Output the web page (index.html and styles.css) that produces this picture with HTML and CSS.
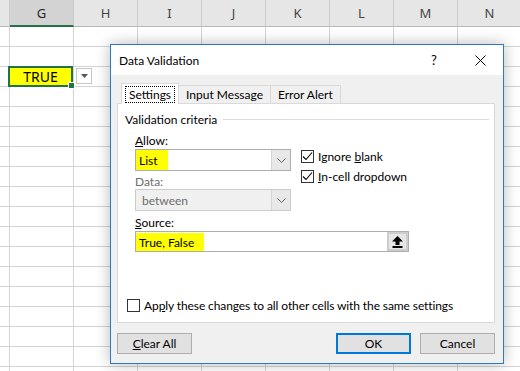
FILE: index.html
```html
<!DOCTYPE html>
<html>
<head>
	<meta charset="utf-8">
	<link rel="stylesheet" href="styles.css">
</head>
<body>
	<!-- worksheet behind the dialog -->
	<div class="sheet">
		<div class="sheet-head">
			<div class="col-head corner"></div>
			<div class="col-head active">G</div>
			<div class="col-head">H</div>
			<div class="col-head">I</div>
			<div class="col-head">J</div>
			<div class="col-head">K</div>
			<div class="col-head">L</div>
			<div class="col-head">M</div>
			<div class="col-head">N</div>
		</div>
		<div class="sheet-body">
			<div class="cell-selected">TRUE</div>
			<div class="cell-drop">
				<svg width="7" height="4" viewBox="0 0 7 4"><path d="M0 0h7L3.5 4z" fill="#555"/></svg>
			</div>
		</div>
	</div>

	<div class="dialog">
		<div class="titlebar">
			<span class="title">Data Validation</span>
			<span class="title-btn">?</span>
			<span class="title-btn">
				<svg width="11" height="11" viewBox="0 0 11 11"><path d="M0.5 0.5l10 10M10.5 0.5l-10 10" stroke="#000" stroke-width="1"/></svg>
			</span>
		</div>
		<div class="dialog-body">
			<div class="tabs">
				<div class="tab selected"><span class="focus">Settings</span></div>
				<div class="tab">Input Message</div>
				<div class="tab">Error Alert</div>
			</div>
			<div class="panel">
				<div class="group-title"><span>Validation criteria</span></div>
				<div class="criteria">
					<div class="fields">
						<div class="label"><u>A</u>llow:</div>
						<div class="combo">
							<span class="combo-value"><span class="mark">List</span></span>
							<span class="combo-btn">
								<svg width="9" height="5" viewBox="0 0 9 5"><path d="M0.5 0.5l4 4 4-4" fill="none" stroke="#606060"/></svg>
							</span>
						</div>
						<div class="label disabled">Data:</div>
						<div class="combo disabled">
							<span class="combo-value">between</span>
							<span class="combo-btn">
								<svg width="9" height="5" viewBox="0 0 9 5"><path d="M0.5 0.5l4 4 4-4" fill="none" stroke="#606060"/></svg>
							</span>
						</div>
					</div>
					<div class="checks">
						<div class="check">
							<span class="box"><svg width="11" height="11" viewBox="0 0 11 11"><path d="M1 5.5l3 3 6-7" fill="none" stroke="#000" stroke-width="1.1"/></svg></span>
							<span>Ignore <u>b</u>lank</span>
						</div>
						<div class="check">
							<span class="box"><svg width="11" height="11" viewBox="0 0 11 11"><path d="M1 5.5l3 3 6-7" fill="none" stroke="#000" stroke-width="1.1"/></svg></span>
							<span><u>I</u>n-cell dropdown</span>
						</div>
					</div>
				</div>
				<div class="label source-label"><u>S</u>ource:</div>
				<div class="source">
					<span class="source-value"><span class="mark">True, False</span></span>
					<span class="source-btn">
						<svg width="11" height="12" viewBox="0 0 11 12"><path d="M5.5 0L11 5.5H7.5V9h-4V5.5H0z" fill="#000"/><rect x="0.5" y="10" width="10" height="2" fill="#000"/></svg>
					</span>
				</div>
				<div class="check apply">
					<span class="box"></span>
					<span>Ap<u>p</u>ly these changes to all other cells with the same settings</span>
				</div>
			</div>
			<div class="buttons">
				<button class="btn"><u>C</u>lear All</button>
				<span class="spacer"></span>
				<button class="btn default">OK</button>
				<button class="btn">Cancel</button>
			</div>
		</div>
	</div>
</body>
</html>
```

FILE: styles.css
```css
html, body {
	margin: 0;
	padding: 0;
	width: 100%;
	height: 100%;
	overflow: hidden;
}
body {
	background-color: #fff;
	font-family: "Noto Sans", "Open Sans", sans-serif;
	font-size: 12px;
	color: #000;
	position: relative;
}

/* worksheet */
.sheet {
	height: 100%;
	display: flex;
	flex-direction: column;
}
.sheet-head {
	display: flex;
	height: 27px;
	flex: none;
}
.col-head {
	box-sizing: border-box;
	width: 64px;
	height: 27px;
	flex: none;
	display: flex;
	align-items: center;
	justify-content: center;
	background-color: #e6e6e6;
	border-right: 1px solid #cacaca;
	border-bottom: 1px solid #b8b8b8;
	color: #444;
	font-size: 13px;
}
.col-head.corner {
	width: 10px;
}
.col-head.active {
	background-color: #d3d3d3;
	border-bottom: 2px solid #217346;
	color: #262626;
}
.sheet-body {
	flex: 1;
	display: grid;
	grid-template-columns: 9px repeat(8, 64px);
	grid-auto-rows: 20px;
	background-image:
		linear-gradient(to right, #d4d4d4 1px, transparent 1px),
		linear-gradient(to bottom, transparent 19px, #d4d4d4 19px);
	background-size: 64px 20px;
	background-position: 9px 0;
}
.cell-selected {
	grid-row: 3;
	grid-column: 2;
	margin: -1px 0 0 -1px;
	box-sizing: border-box;
	height: 21px;
	border: 2px solid #217346;
	background-color: #ffff00;
	display: flex;
	align-items: center;
	justify-content: center;
	font-size: 14px;
	position: relative;
}
.cell-selected::after {
	content: '';
	position: absolute;
	right: -4px;
	bottom: -4px;
	width: 5px;
	height: 5px;
	background-color: #217346;
	border: 1px solid #fff;
}
.cell-drop {
	grid-row: 3;
	grid-column: 3;
	box-sizing: border-box;
	width: 16px;
	height: 16px;
	margin: 1px 0 0 3px;
	background-color: #fff;
	border: 1px solid #c6c6c6;
	display: flex;
	align-items: center;
	justify-content: center;
}

/* dialog */
.dialog {
	position: absolute;
	left: 110px;
	top: 44px;
	width: 392px;
	background-color: #f0f0f0;
	border: 1px solid #2a7ac4;
	box-shadow: 0 0 14px rgba(0, 0, 0, 0.28);
	font-family: Lato, "Noto Sans", sans-serif;
	font-size: 12px;
}
.titlebar {
	height: 30px;
	display: flex;
	align-items: center;
	background-color: #fff;
	padding-left: 8px;
}
.title {
	flex: 1;
	font-size: 12px;
}
.title-btn {
	width: 46px;
	height: 30px;
	display: flex;
	align-items: center;
	justify-content: center;
	font-size: 13px;
}
.dialog-body {
	padding: 8px 8px 9px 6px;
}
.tabs {
	display: flex;
	align-items: flex-end;
	height: 20px;
	padding-left: 4px;
}
.tab {
	box-sizing: border-box;
	height: 18px;
	padding: 0 7px;
	margin-right: -1px;
	border: 1px solid #d9d9d9;
	border-bottom: none;
	background-color: #f0f0f0;
	display: flex;
	align-items: center;
}
.tab.selected {
	height: 21px;
	margin-bottom: -1px;
	padding: 0 3px;
	background-color: #fff;
	position: relative;
	z-index: 1;
}
.focus {
	border: 1px dotted #000;
	padding: 0 3px;
	line-height: 15px;
}
.panel {
	box-sizing: border-box;
	height: 220px;
	background-color: #fff;
	border: 1px solid #d9d9d9;
	padding: 8px 5px 0 7px;
}
.group-title {
	display: flex;
	align-items: center;
	height: 15px;
	line-height: 15px;
}
.group-title::after {
	content: '';
	flex: 1;
	height: 1px;
	background-color: #dcdcdc;
	margin-left: 6px;
}
.criteria {
	display: flex;
	margin: 6px 0 0 10px;
}
.fields {
	width: 156px;
}
.label {
	line-height: 15px;
}
.label.disabled {
	margin-top: 3px;
	color: #6d6d6d;
}
.combo {
	box-sizing: border-box;
	display: flex;
	height: 22px;
	margin-top: 1px;
	border: 1px solid #abadb3;
	background-color: #fff;
}
.combo.disabled {
	background-color: #f0f0f0;
	border-color: #cccccc;
	color: #6d6d6d;
	margin-top: 0;
}
.combo-value {
	flex: 1;
	display: flex;
	align-items: center;
	padding-left: 3px;
}
.combo.disabled .combo-value {
	padding-left: 6px;
}
.combo-btn {
	width: 18px;
	display: flex;
	align-items: center;
	justify-content: center;
	background-color: #e8e8e8;
	border-left: 1px solid #d4d4d4;
}
.mark {
	background-color: #ffff00;
	align-self: stretch;
	display: flex;
	align-items: center;
	padding: 0 10px 0 3px;
	margin-left: -3px;
}
.checks {
	margin: 17px 0 0 10px;
	display: flex;
	flex-direction: column;
	gap: 7px;
}
.check {
	display: flex;
	align-items: center;
	gap: 4px;
	line-height: 13px;
}
.box {
	box-sizing: border-box;
	width: 13px;
	height: 13px;
	border: 1px solid #333;
	background-color: #fff;
	display: flex;
	align-items: center;
	justify-content: center;
	flex: none;
}
.source-label {
	margin: 4px 0 0 10px;
}
.source {
	box-sizing: border-box;
	display: flex;
	width: 274px;
	height: 21px;
	margin: 1px 0 0 10px;
	border: 1px solid #abadb3;
}
.source-value {
	flex: 1;
	display: flex;
	align-items: stretch;
	padding: 1px 0 0 3px;
}
.source-btn {
	box-sizing: border-box;
	width: 21px;
	background-color: #e6e6e6;
	border: 2px solid #cdcdcd;
	display: flex;
	align-items: center;
	justify-content: center;
}
.apply {
	margin: 47px 0 0 2px;
	letter-spacing: -0.1px;
}

.buttons {
	display: flex;
	gap: 9px;
	margin-top: 10px;
}
.spacer {
	flex: 1;
}
.btn {
	box-sizing: border-box;
	width: 75px;
	height: 21px;
	padding: 0;
	font-family: inherit;
	font-size: 12px;
	color: #000;
	background-color: #e1e1e1;
	border: 1px solid #adadad;
}
.btn.default {
	border: 2px solid #0078d7;
}
```
